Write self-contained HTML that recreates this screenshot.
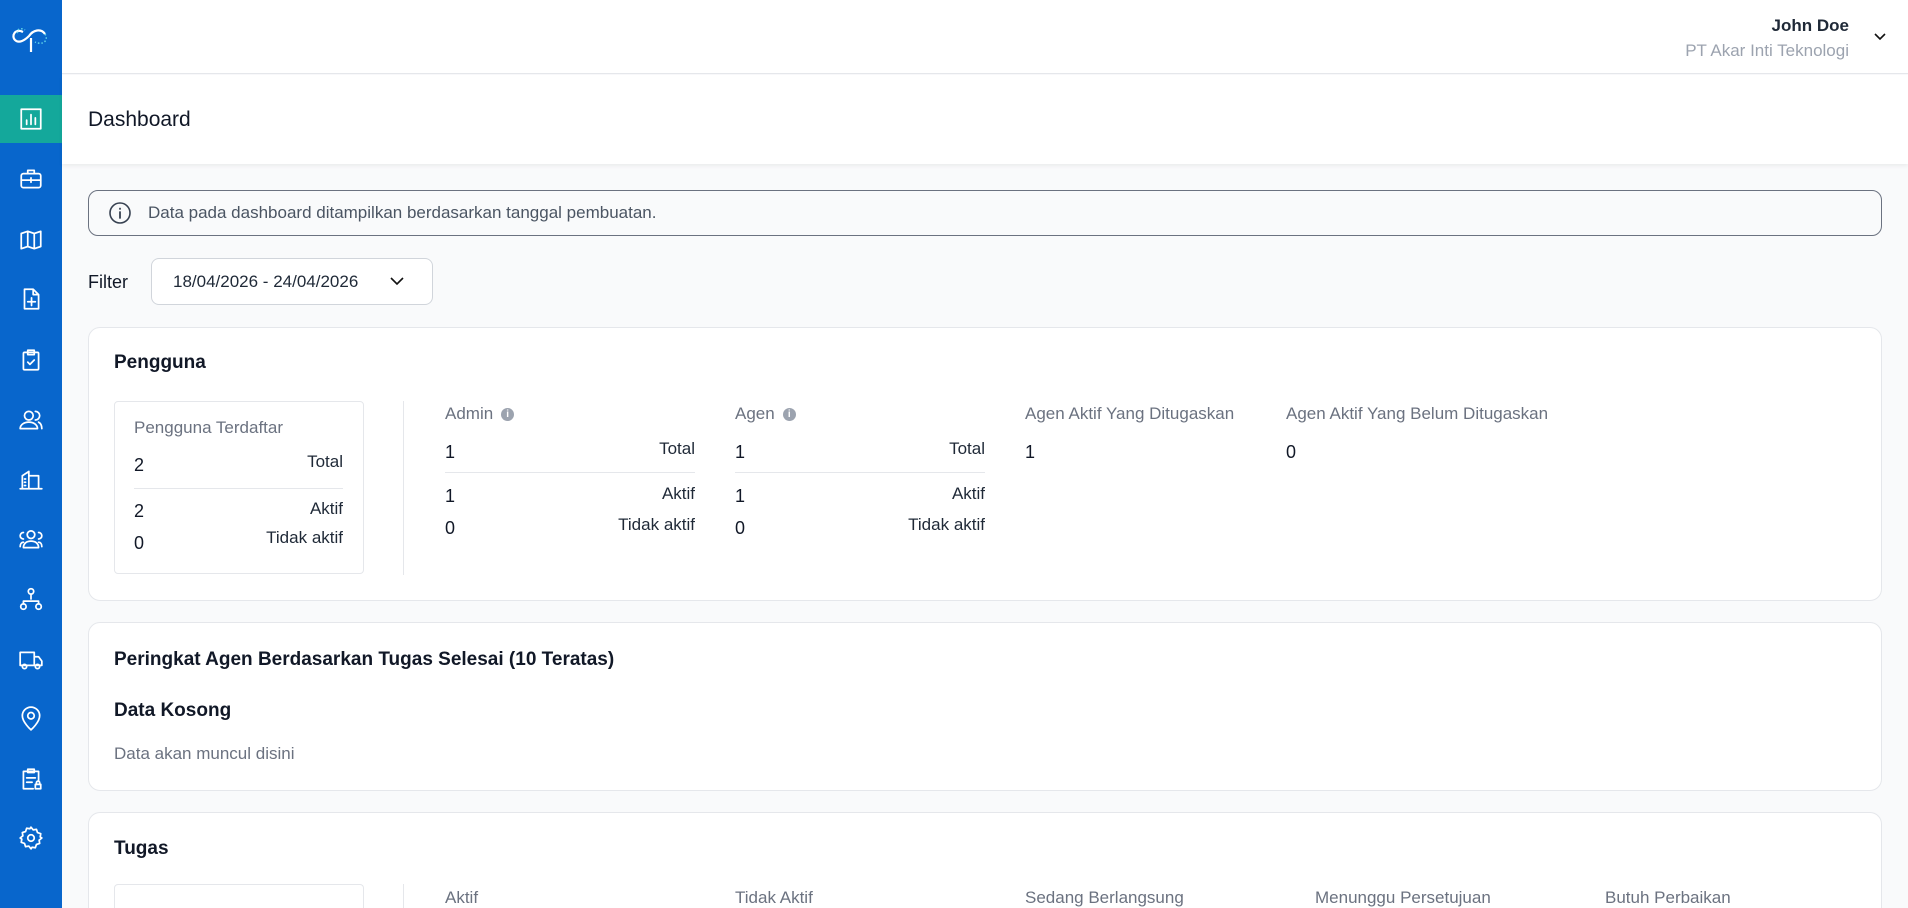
<!DOCTYPE html>
<html style="width:1908px;height:908px;overflow:hidden"><head><meta charset="utf-8"><style>
*{margin:0;padding:0;box-sizing:border-box}
body{width:1908px;height:908px;overflow:hidden;font-family:"Liberation Sans",sans-serif;background:#f9fafb;position:relative;color:#111827}
.a{position:absolute;white-space:nowrap}
#sb{position:absolute;left:0;top:0;width:62px;height:908px;background:#0866cc}
#act{position:absolute;left:0;top:95px;width:62px;height:48px;background:#14a89b}
.ic{position:absolute;left:18px;width:26px;height:26px}
.ic svg{width:26px;height:26px;fill:none;stroke:#fff;stroke-width:1.6;stroke-linecap:round;stroke-linejoin:round}
#hd{position:absolute;left:62px;top:0;right:0;height:74px;background:#fff;border-bottom:1px solid #e5e7eb}
#band{position:absolute;left:62px;top:75px;right:0;height:89px;background:#fff;box-shadow:0 2px 4px rgba(0,0,0,.06)}
.card{position:absolute;left:88px;width:1794px;background:#fff;border:1px solid #e5e7eb;border-radius:12px}
.t{font-size:19px;font-weight:bold;color:#111827}
.g{color:#6b7280;font-size:17px}
.n{font-size:18px;color:#111827}
.r{font-size:17px;color:#1f2937;text-align:right}
.hr{position:absolute;height:1px;background:#e5e7eb}
.inf{display:inline-block;width:13px;height:13px;border-radius:50%;background:#9ca3af;color:#fff;font-size:10px;text-align:center;line-height:13px;font-weight:bold;vertical-align:2px;margin-left:8px}
</style></head><body>
<div id="sb">
<svg class="a" style="left:9px;top:24px" width="44" height="32" viewBox="0 0 44 32"><path d="M14 8 C6 4 2 12 6 16 C10 20 16 16 20 12 C24 6 32 4 36 10" fill="none" stroke="#fff" stroke-width="2.2"/><path d="M22 14 L22 28" stroke="#fff" stroke-width="2.2"/><path d="M9 9 C6 6 12 3 16 6" fill="none" stroke="#5fd3e8" stroke-width="1.5" stroke-dasharray="1.5 2"/><path d="M36 10 C40 16 34 22 26 18" fill="none" stroke="#5fd3e8" stroke-width="1.5" stroke-dasharray="1.5 2"/></svg>
<div id="act"></div>
<div class="ic" style="top:106px"><svg viewBox="0 0 24 24"><rect x="3" y="3" width="18" height="18"/><path d="M8 17v-4M12 17V8M16 17v-6"/></svg></div>
<div class="ic" style="top:166px"><svg viewBox="0 0 24 24"><rect x="3" y="7" width="18" height="13" rx="2"/><path d="M9 7V4h6v3M3 13h18M12 11v4"/></svg></div>
<div class="ic" style="top:227px"><svg viewBox="0 0 24 24"><path d="M3 6l6-2 6 2 6-2v14l-6 2-6-2-6 2zM9 4v14M15 6v14"/></svg></div>
<div class="ic" style="top:286px"><svg viewBox="0 0 24 24"><path d="M6 3h8l5 5v13H6zM14 3v5h5M12.5 11v7M9 14.5h7"/></svg></div>
<div class="ic" style="top:347px"><svg viewBox="0 0 24 24"><rect x="5" y="5" width="14" height="16" rx="1"/><path d="M9 3h6v4H9zM9 14l2 2 4-4"/></svg></div>
<div class="ic" style="top:407px"><svg viewBox="0 0 24 24"><circle cx="10" cy="8" r="4"/><path d="M2 20c0-4 4-6 8-6s8 2 8 6zM16 4a4 4 0 010 8M19 14c2 1 3 3 3 6"/></svg></div>
<div class="ic" style="top:466px"><svg viewBox="0 0 24 24"><path d="M2 21h20M4 21V9l6-4v16M10 9h9v12M6 12h1M6 15h1M6 18h1"/></svg></div>
<div class="ic" style="top:526px"><svg viewBox="0 0 24 24"><circle cx="12" cy="8" r="3.5"/><path d="M5 20c0-4 3-6 7-6s7 2 7 6zM5 6a3 3 0 000 6M19 6a3 3 0 010 6M2 19c0-2 1-4 3-4M22 19c0-2-1-4-3-4"/></svg></div>
<div class="ic" style="top:586px"><svg viewBox="0 0 24 24"><circle cx="12" cy="5" r="2.5"/><circle cx="5" cy="19" r="2.5"/><circle cx="19" cy="19" r="2.5"/><path d="M12 7.5V12M5 16.5V14h14v2.5"/></svg></div>
<div class="ic" style="top:647px"><svg viewBox="0 0 24 24"><path d="M2 5h13v12H2zM15 9h4l3 4v4h-7"/><circle cx="6" cy="18" r="2"/><circle cx="18" cy="18" r="2"/></svg></div>
<div class="ic" style="top:706px"><svg viewBox="0 0 24 24"><path d="M12 22s8-7 8-13a8 8 0 00-16 0c0 6 8 13 8 13z"/><circle cx="12" cy="9" r="3"/></svg></div>
<div class="ic" style="top:766px"><svg viewBox="0 0 24 24"><path d="M14 21H5V5h14v9M9 3h6v3H9zM8 11h8M8 15h5"/><rect x="16" y="17" width="5" height="4"/><path d="M17 17v-1.5a1.5 1.5 0 013 0V17"/></svg></div>
<div class="ic" style="top:825px"><svg viewBox="0 0 24 24"><circle cx="12" cy="12" r="3"/><path d="M12 2l2 2.5 3-.5 1 3 3 1-.5 3L22 12l-2.5 2 .5 3-3 1-1 3-3-.5L12 22l-2-2.5-3 .5-1-3-3-1 .5-3L2 12l2.5-2-.5-3 3-1 1-3 3 .5z"/></svg></div>
</div>
<div id="hd">
<div class="a" style="right:59px;top:16px;font-size:17px;font-weight:bold;color:#1f2937">John Doe</div>
<div class="a" style="right:59px;top:41px;font-size:17px;color:#9ca3af">PT Akar Inti Teknologi</div>
<svg class="a" style="right:21px;top:29px" width="14" height="14" viewBox="0 0 14 14"><path d="M2 5l5 5 5-5" fill="none" stroke="#111" stroke-width="1.6"/></svg>
</div>
<div id="band"><div class="a" style="left:26px;top:33px;font-size:21px;color:#111827">Dashboard</div></div>

<div class="a" style="left:88px;top:190px;width:1794px;height:46px;border:1px solid #6b7280;border-radius:10px;background:#f9fafb"></div>
<svg class="a" style="left:108px;top:201px" width="24" height="24" viewBox="0 0 24 24"><circle cx="12" cy="12" r="10" fill="none" stroke="#374151" stroke-width="1.6"/><path d="M12 11v6M12 7.5v.5" stroke="#374151" stroke-width="1.8" stroke-linecap="round"/></svg>
<div class="a" style="left:148px;top:203px;font-size:17px;color:#4b5563">Data pada dashboard ditampilkan berdasarkan tanggal pembuatan.</div>

<div class="a" style="left:88px;top:272px;font-size:18px;color:#111827">Filter</div>
<div class="a" style="left:151px;top:258px;width:282px;height:47px;border:1px solid #d1d5db;border-radius:8px;background:#fff"></div>
<div class="a" style="left:173px;top:272px;font-size:17px;color:#1f2937">18/04/2026 - 24/04/2026</div>
<svg class="a" style="left:389px;top:273px" width="16" height="16" viewBox="0 0 16 16"><path d="M2 5l6 6 6-6" fill="none" stroke="#111" stroke-width="1.6"/></svg>

<div class="card" style="top:327px;height:274px"></div>
<div class="a t" style="left:114px;top:352px">Pengguna</div>
<div class="a" style="left:114px;top:401px;width:250px;height:173px;border:1px solid #e5e7eb;border-radius:4px"></div>
<div class="a g" style="left:134px;top:418px;font-size:17px">Pengguna Terdaftar</div>
<div class="a n" style="left:134px;top:455px">2</div><div class="a r" style="right:1565px;top:452px">Total</div>
<div class="hr" style="left:134px;width:209px;top:488px"></div>
<div class="a n" style="left:134px;top:501px">2</div><div class="a r" style="right:1565px;top:499px">Aktif</div>
<div class="a n" style="left:134px;top:533px">0</div><div class="a r" style="right:1565px;top:528px">Tidak aktif</div>
<div class="hr" style="left:403px;width:1px;top:401px;height:174px"></div>

<div class="a g" style="left:445px;top:404px">Admin<span class="inf">i</span></div>
<div class="a n" style="left:445px;top:442px">1</div><div class="a r" style="right:1213px;top:439px">Total</div>
<div class="hr" style="left:445px;width:250px;top:472px"></div>
<div class="a n" style="left:445px;top:486px">1</div><div class="a r" style="right:1213px;top:484px">Aktif</div>
<div class="a n" style="left:445px;top:518px">0</div><div class="a r" style="right:1213px;top:515px">Tidak aktif</div>

<div class="a g" style="left:735px;top:404px">Agen<span class="inf">i</span></div>
<div class="a n" style="left:735px;top:442px">1</div><div class="a r" style="right:923px;top:439px">Total</div>
<div class="hr" style="left:735px;width:250px;top:472px"></div>
<div class="a n" style="left:735px;top:486px">1</div><div class="a r" style="right:923px;top:484px">Aktif</div>
<div class="a n" style="left:735px;top:518px">0</div><div class="a r" style="right:923px;top:515px">Tidak aktif</div>

<div class="a g" style="left:1025px;top:404px">Agen Aktif Yang Ditugaskan</div>
<div class="a n" style="left:1025px;top:442px">1</div>
<div class="a g" style="left:1286px;top:404px">Agen Aktif Yang Belum Ditugaskan</div>
<div class="a n" style="left:1286px;top:442px">0</div>

<div class="card" style="top:622px;height:169px"></div>
<div class="a t" style="left:114px;top:649px">Peringkat Agen Berdasarkan Tugas Selesai (10 Teratas)</div>
<div class="a t" style="left:114px;top:700px">Data Kosong</div>
<div class="a g" style="left:114px;top:744px">Data akan muncul disini</div>

<div class="card" style="top:812px;height:96px;border-bottom:none;border-radius:12px 12px 0 0"></div>
<div class="a t" style="left:114px;top:838px">Tugas</div>
<div class="a" style="left:114px;top:884px;width:250px;height:24px;border:1px solid #e5e7eb;border-bottom:none;border-radius:4px 4px 0 0"></div>
<div class="hr" style="left:403px;width:1px;top:884px;height:24px"></div>
<div class="a g" style="left:445px;top:888px">Aktif</div>
<div class="a g" style="left:735px;top:888px">Tidak Aktif</div>
<div class="a g" style="left:1025px;top:888px">Sedang Berlangsung</div>
<div class="a g" style="left:1315px;top:888px">Menunggu Persetujuan</div>
<div class="a g" style="left:1605px;top:888px">Butuh Perbaikan</div>
</body></html>
